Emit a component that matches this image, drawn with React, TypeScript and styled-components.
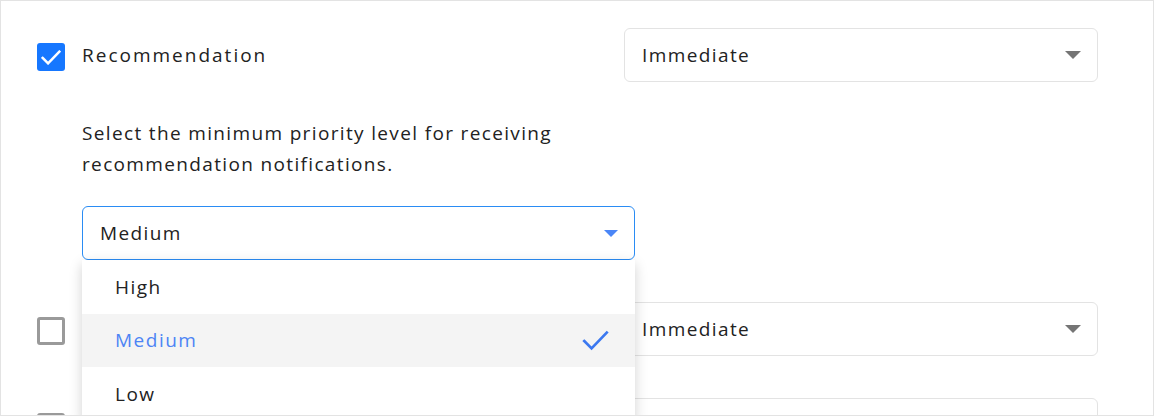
import React from "react";
import styled, { createGlobalStyle } from "styled-components";

const Global = createGlobalStyle`
  html, body { margin: 0; padding: 0; background: #fff; }
  body { font-family: "Open Sans", "Liberation Sans", sans-serif; color: #222; }
  * { box-sizing: border-box; }
`;

const Frame = styled.div`
  width: 1154px;
  height: 416px;
  border: 1px solid #e3e3e3;
  overflow: hidden;
  padding: 27px 55px 0 36px;
  display: flex;
  flex-direction: column;
  gap: 42px;
`;

const Section = styled.div`
  display: flex;
  flex-direction: column;
`;

const Line = styled.div`
  display: flex;
  align-items: center;
  justify-content: space-between;
`;

const Header = styled.div`
  height: 54px;
  display: flex;
  align-items: center;
  gap: 17px;
`;

const Box = styled.div<{ $checked?: boolean }>`
  width: 28px;
  height: 28px;
  margin-top: 4px;
  border-radius: 3px;
  display: flex;
  align-items: center;
  justify-content: center;
  background: ${(p) => (p.$checked ? "#1677ff" : "#fff")};
  border: ${(p) => (p.$checked ? "none" : "3px solid #9a9a9a")};
`;

const Label = styled.span`
  font-size: 19px;
  letter-spacing: 2px;
  color: #222;
`;

const Details = styled.div`
  margin-left: 45px;
  padding-top: 36px;
  display: flex;
  flex-direction: column;
  gap: 26px;
`;

const Description = styled.p`
  margin: 0;
  width: 500px;
  font-size: 19px;
  letter-spacing: 1.35px;
  line-height: 31px;
  color: #222;
`;

const SelectWrap = styled.div`
  position: relative;
  width: 553px;
`;

const SelectBox = styled.div<{ $width: number; $active?: boolean }>`
  flex-shrink: 0;
  width: ${(p) => p.$width}px;
  height: 54px;
  border: 1px solid ${(p) => (p.$active ? "#2a8cf4" : "#e3e3e3")};
  border-radius: 6px;
  display: flex;
  align-items: center;
  justify-content: space-between;
  padding: 0 16px 0 17px;
  font-size: 19px;
  letter-spacing: 1.4px;
  color: #222;
  background: #fff;
`;

const Arrow = styled.span<{ $active?: boolean }>`
  width: 0;
  height: 0;
  border-left: ${(p) => (p.$active ? 7 : 8)}px solid transparent;
  border-right: ${(p) => (p.$active ? 7 : 8)}px solid transparent;
  border-top: ${(p) => (p.$active ? 7 : 8)}px solid ${(p) => (p.$active ? "#4a86f7" : "#757575")};
`;

const Menu = styled.ul`
  position: absolute;
  top: 54px;
  left: 0;
  width: 553px;
  margin: 0;
  padding: 0;
  list-style: none;
  background: #fff;
  box-shadow: 0 4px 12px rgba(0, 0, 0, 0.18);
  z-index: 2;
`;

const Item = styled.li<{ $selected?: boolean }>`
  height: 53.5px;
  display: flex;
  align-items: center;
  justify-content: space-between;
  padding: 0 26px 0 33px;
  font-size: 19px;
  letter-spacing: 1.5px;
  color: ${(p) => (p.$selected ? "#4d84f5" : "#222")};
  background: ${(p) => (p.$selected ? "#f4f4f4" : "#fff")};
`;

const Check = ({ color, w, h, sw }: { color: string; w: number; h: number; sw: number }) => (
  <svg width={w} height={h} viewBox="0 0 24 18" fill="none">
    <path d="M2 9.5 L8.5 16 L22 2" stroke={color} strokeWidth={sw} strokeLinecap="square" />
  </svg>
);

const rows = ["row-2", "row-3"];

export default function App() {
  return (
    <>
      <Global />
      <Frame>
        <Section>
          <Line>
            <Header>
              <Box $checked>
                <Check color="#fff" w={20} h={15} sw={3} />
              </Box>
              <Label>Recommendation</Label>
            </Header>
            <SelectBox $width={474}>
              Immediate
              <Arrow />
            </SelectBox>
          </Line>
          <Details>
            <Description>
              Select the minimum priority level for receiving recommendation notifications.
            </Description>
            <SelectWrap>
              <SelectBox $width={553} $active>
                Medium
                <Arrow $active />
              </SelectBox>
              <Menu>
                <Item>High</Item>
                <Item $selected>
                  Medium
                  <Check color="#3b78f0" w={27} h={21} sw={2.4} />
                </Item>
                <Item>Low</Item>
              </Menu>
            </SelectWrap>
          </Details>
        </Section>
        {rows.map((r) => (
          <Line key={r}>
            <Header>
              <Box />
            </Header>
            <SelectBox $width={474}>
              Immediate
              <Arrow />
            </SelectBox>
          </Line>
        ))}
      </Frame>
    </>
  );
}
